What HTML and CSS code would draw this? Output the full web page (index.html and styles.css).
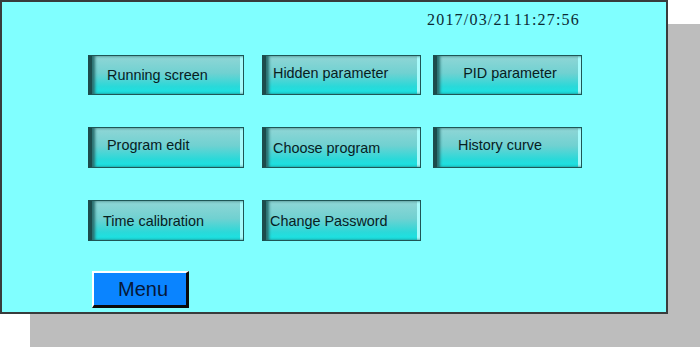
FILE: index.html
```html
<!DOCTYPE html>
<html>
<head>
<meta charset="utf-8">
<link rel="stylesheet" href="styles.css">
</head>
<body>
<div class="panel">
  <div class="clock">2017/03/21 11:27:56</div>
  <div class="grid">
    <div class="btn c1 p19">Running screen</div>
    <div class="btn c3 p11 up2">Hidden parameter</div>
    <div class="btn c5 center up2">PID parameter</div>
    <div class="btn c1 p19 up3">Program edit</div>
    <div class="btn c3 p11">Choose program</div>
    <div class="btn c5 p25 up3">History curve</div>
    <div class="btn c1 p15">Time calibration</div>
    <div class="btn c3 p8">Change Password</div>
  </div>
  <div class="menu">Menu</div>
</div>
</body>
</html>
```

FILE: styles.css
```css
html, body {
  margin: 0;
  padding: 0;
  background: #ffffff;
  overflow: hidden;
}

body {
  width: 700px;
  height: 347px;
}

.panel {
  box-sizing: border-box;
  width: 668px;
  height: 314px;
  background: #80ffff;
  border: 2px solid #383c3c;
  box-shadow: 35px 29px 0 5px #bdbdbd;
  display: flex;
  flex-direction: column;
  align-items: flex-start;
}

.clock {
  margin: 9px 0 0 425px;
  font-family: "Liberation Serif", "DejaVu Serif", serif;
  font-size: 16px;
  line-height: 18px;
  letter-spacing: 1.2px;
  word-spacing: -3px;
  color: #0c2a34;
  white-space: nowrap;
}

.grid {
  margin: 26px 0 0 86px;
  display: grid;
  grid-template-columns: 156px 18px 159px 12px 149px;
  grid-template-rows: 40px 41px 41px;
  row-gap: 32px;
}

.btn {
  box-sizing: border-box;
  display: flex;
  align-items: center;
  font-family: "Liberation Sans", Arial, sans-serif;
  font-size: 14.4px;
  color: #06201f;
  white-space: nowrap;
  border: 1px solid #1f5656;
  border-left: 4px solid #1c4c4c;
  background: linear-gradient(to bottom, #90d6d6 0%, #70d1d1 45%, #2ad9d9 80%, #18e4e4 100%);
  box-shadow:
    inset 3px 0 3px #2a7070,
    inset -3px 0 0 #a8fbfb,
    inset 0 1px 0 #9ad8d8;
}

.c1 { grid-column: 1; }
.c3 { grid-column: 3; }
.c5 { grid-column: 5; }

.p8 { padding-left: 4px; }
.p11 { padding-left: 7px; }
.p15 { padding-left: 11px; }
.p19 { padding-left: 15px; }
.p25 { padding-left: 21px; }
.center { justify-content: center; padding-left: 2px; }

.up2 { padding-bottom: 4px; }
.up3 { padding-bottom: 5px; }

.menu {
  box-sizing: border-box;
  margin: 30px 0 0 90px;
  width: 97px;
  height: 37px;
  background: #0a84ff;
  border-top: 2px solid #ffffff;
  border-left: 2px solid #ffffff;
  border-right: 3px solid #0a0a0a;
  border-bottom: 3px solid #0a0a0a;
  display: flex;
  align-items: center;
  justify-content: center;
  padding-left: 6px;
  font-family: "Liberation Sans", Arial, sans-serif;
  font-size: 20px;
  color: #061838;
}
```
